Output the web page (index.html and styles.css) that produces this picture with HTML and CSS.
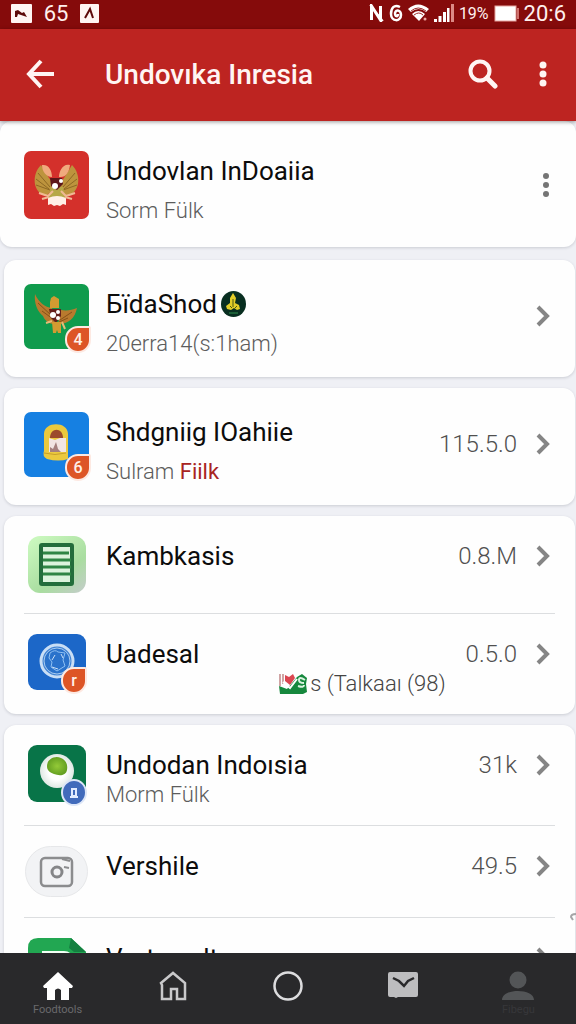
FILE: index.html
```html
<!DOCTYPE html>
<html lang="id">
<head>
    <meta charset="UTF-8">
    <meta name="viewport" content="width=device-width, initial-scale=1.0">
    <title>Undovıka Inresia</title>
    <link rel="stylesheet" href="styles.css">
</head>
<body>
    <div class="status">
        <svg width="21" height="19" viewBox="0 0 21 19"><rect width="21" height="19" rx="1" fill="#fff5f3"/><path d="M4 13V7l3-1 4 3 2-1 3 5-6-2-3-1-1 3z" fill="#5d0909"/></svg>
        <span class="status-num">65</span>
        <svg width="19" height="19" viewBox="0 0 19 19"><rect width="19" height="19" rx="1" fill="#fff5f3"/><path d="M5 14l5-9 3 9" fill="none" stroke="#5d0909" stroke-width="2"/></svg>
        <div class="status-right">
            <svg width="15" height="18" viewBox="0 0 15 18" fill="none" stroke="#fff"><path d="M2.500 16V2l9 14V2" stroke-width="3"/><path d="M1 1l13 16" stroke-width="1.500"/></svg>
            <svg width="14" height="18" viewBox="0 0 14 18" fill="none" stroke="#fff" stroke-width="2.500"><path d="M11 3C5 0 2 4 2 10c0 8 10 8 10 1 0-5-5-6-6-2 0 4 3 4 3 1"/></svg>
            <svg width="21" height="18" viewBox="0 0 21 18" fill="#fff"><path d="M0 5q10-9 21 0l-3 3q-7-6-15 0z"/><path d="M4 10q6-6 13 0l-6 7z"/><path d="M3 7q7-6 15 0M6 11q5-4 9 0" fill="none" stroke="#9c2a2a"/><circle cx="17" cy="15" r="1.500" fill="#f0a8a4"/></svg>
            <svg width="20" height="18" viewBox="0 0 20 18" fill="#fff"><path d="M0 15h3v3H0zM4.500 12h3v6h-3zM9 8h3v10H9zM13 4h2.500v14H13z"/><path d="M17 0h3v18h-3z" fill="#dc8a86"/></svg>
            <span class="status-pct">19%</span>
            <svg width="25" height="17" viewBox="0 0 25 17"><rect x="1" y="1" width="21" height="15" fill="#fff" stroke="#e8a5a0"/><path d="M23 3h2v11h-2z" fill="#cf716d"/></svg>
            <span class="status-time">20:6</span>
        </div>
    </div>

    <header class="bar">
        <button class="icon-btn" aria-label="Back">
            <svg width="28" height="30" viewBox="0 0 28 30" fill="none" stroke="#fff5f3" stroke-width="4"><path d="M15 2L3 15l12 13M3 15h25"/></svg>
        </button>
        <h1>Undovıka Inresia</h1>
        <button class="icon-btn" aria-label="Search">
            <svg width="30" height="30" viewBox="0 0 30 30" fill="none" stroke="#fff5f3"><circle cx="12" cy="12" r="9.500" stroke-width="4"/><path d="M19 19l8 8" stroke-width="5" stroke-linecap="round"/></svg>
        </button>
        <button class="icon-btn" aria-label="More">
            <svg width="8" height="26" viewBox="0 0 8 26" fill="#fff5f3"><circle cx="4" cy="4" r="3.500"/><circle cx="4" cy="13" r="3.500"/><circle cx="4" cy="22" r="3.500"/></svg>
        </button>
    </header>

    <main class="feed">
        <section class="card card-top">
            <div class="row row-large">
                <div class="app">
                    <svg width="65" height="68" viewBox="0 0 65 68">
                        <rect width="65" height="68" rx="7" fill="#d4302b"/>
                        <path d="M17 14C7 24 9 42 22 45l10-9-7-9zM48 14c10 10 8 28-5 31l-10-9 7-9z" fill="#bd943d"/>
                        <path d="M14 22l12 14M12 28l13 10M12 34l14 5M51 22L39 36M53 28L40 38M53 34l-14 5" stroke="#8d6824" stroke-width="1"/>
                        <path d="M18 14c7-1 10 6 10 12-6 0-10-6-10-12zM46 14c-7-2-11 6-11 12 7 1 10-5 11-12z" fill="#f0aa7d"/>
                        <path d="M27 36h12l3 12H24z" fill="#b6a847"/>
                        <path d="M24 47q9-4 18 0v7l-3-1-3 2-3-1-3 1-3-2-3 1z" fill="#fff0e6"/>
                        <path d="M26 27h12l1 6-6 6-6-4z" fill="#5c1719"/>
                        <circle cx="31" cy="35" r="3" fill="#fff"/><circle cx="37" cy="30" r="2" fill="#fff"/>
                        <path d="M15 42l9 3 5-5M51 42l-9 3-5-5M18 48l7-2M48 48l-7-2" stroke="#f0b994" stroke-width="2" fill="none"/>
                    </svg>
                </div>
                <div class="text">
                    <h2>Undovlan InDoaiia</h2>
                    <p>Sorm Fülk</p>
                </div>
                <button class="more-btn" aria-label="Options">
                    <svg width="24" height="24" viewBox="0 0 24 24" fill="#757575"><circle cx="12" cy="3" r="3"/><circle cx="12" cy="12" r="3"/><circle cx="12" cy="21" r="3"/></svg>
                </button>
            </div>
        </section>

        <section class="card">
            <a class="row row-large" href="#">
                <div class="app">
                    <svg width="65" height="65" viewBox="0 0 65 65">
                        <rect width="65" height="65" rx="7" fill="#109b4d"/>
                        <path d="M11 10c4 9 10 13 17 14l5 16c-7 1-12-3-14-8C13 27 10 19 11 10z" fill="#b97a2e"/>
                        <path d="M53 24c-5 2-10 3-16 2l-3 14c11 0 17-6 19-16z" fill="#b97a2e"/>
                        <path d="M14 19l14 13M18 27l11 8M48 28L36 36M44 34l-9 4" stroke="#875018" stroke-width="1"/>
                        <path d="M27 14l3-2 5 3v9h-9v-6z" fill="#d39b31"/>
                        <path d="M25 25h12v7l-5 7-5-5z" fill="#641f1c"/>
                        <circle cx="29" cy="31" r="3" fill="#fff"/><circle cx="34" cy="28" r="2" fill="#fff"/><circle cx="34" cy="34" r="2" fill="#fff"/>
                        <path d="M28 38h9v11h-3l-1-3-1 3h-3z" fill="#d39b31"/>
                        <path d="M28 37l-6 2m16-1l3 7" stroke="#e6bb76" stroke-width="2"/>
                    </svg>
                    <span class="badge">4</span>
                </div>
                <div class="text">
                    <h2>БïdaShod<svg class="seal" width="25" height="26" viewBox="0 0 25 26"><ellipse cx="12.500" cy="13" rx="12.500" ry="13" fill="#082e20"/><path d="M12 2l3 5-1 5 4 2 1 4-3 1-3-2-3 2-4-1-1-3 4-3V7z" fill="#e2cd27"/><path d="M12 8v8M9 15l2 2m5-2l-2 2" stroke="#4c5a12"/><path d="M8 22h9" stroke="#2e8f4c"/></svg></h2>
                    <p>20erra14(s:1ham)</p>
                </div>
                <svg class="chevron" width="24" height="24" viewBox="0 0 24 24"><path d="M7 3l9 9-9 9"/></svg>
            </a>
        </section>

        <section class="card">
            <a class="row row-large" href="#">
                <div class="app">
                    <svg width="65" height="65" viewBox="0 0 65 65">
                        <rect width="65" height="65" rx="7" fill="#1680e2"/>
                        <path d="M20 22c0-13 24-13 24 0v25q-9 3-21 0-5-3-3-8z" fill="#ebc93e"/>
                        <path d="M20 41q11 3 22 0" stroke="#c79f2c" fill="none"/>
                        <path d="M26 26c0-11 13-11 13 0z" fill="#9c4b2c"/>
                        <path d="M25 26l6 2 5-2h6v14H25z" fill="#f2e5e4"/>
                        <path d="M26 40v-5l3 2 3-7 2 7 3 3z" fill="#a5807f"/>
                    </svg>
                    <span class="badge">6</span>
                </div>
                <div class="text">
                    <h2>Shdgniig IOahiie</h2>
                    <p>Sulram <em>Fiilk</em></p>
                </div>
                <span class="value">115.5.0</span>
                <svg class="chevron" width="24" height="24" viewBox="0 0 24 24"><path d="M7 3l9 9-9 9"/></svg>
            </a>
        </section>

        <section class="card">
            <a class="row" href="#">
                <div class="app">
                    <svg width="58" height="57" viewBox="0 0 58 57">
                        <defs><linearGradient id="mint" x1="0.200" y1="0" x2="1" y2="1"><stop offset="0" stop-color="#c9f7bd"/><stop offset="0.600" stop-color="#a9dda0"/><stop offset="1" stop-color="#c5cccb"/></linearGradient></defs>
                        <rect width="58" height="57" rx="12" fill="url(#mint)"/>
                        <rect x="13" y="9" width="31" height="39" rx="1" fill="#dcf3dc" stroke="#236d3b" stroke-width="4"/>
                        <path d="M15 17h26M15 24h28M15 31h28M15 38h28" stroke="#2f8544" stroke-width="3"/>
                    </svg>
                </div>
                <div class="text">
                    <h2>Kambkasis</h2>
                </div>
                <span class="value">0.8.M</span>
                <svg class="chevron" width="24" height="24" viewBox="0 0 24 24"><path d="M7 3l9 9-9 9"/></svg>
            </a>
            <a class="row" href="#">
                <div class="app">
                    <svg width="58" height="56" viewBox="0 0 58 56">
                        <rect width="58" height="56" rx="9" fill="#1c67c8"/>
                        <circle cx="29" cy="27" r="16" fill="#3f82d4" stroke="#c9def5" stroke-width="3"/>
                        <circle cx="29" cy="27" r="13" fill="#2a72cb" stroke="#a9cbef" stroke-width="1"/>
                        <path d="M22 19q5-4 8-1l7 1-2 7 2 6-8 5-6-4 1-5-3-4z" fill="none" stroke="#8ec0f3"/>
                        <path d="M24 26l3-5M33 20l2 4M24 33l6 2" stroke="#c9def5"/>
                    </svg>
                    <span class="badge">r</span>
                </div>
                <div class="text">
                    <h2>Uadesal</h2>
                    <p class="note"><svg width="28" height="22" viewBox="0 0 28 22"><path d="M0 13l8 3L18 4l5-3 5 4-1 6 1 8-4 2H1z" fill="#16883d"/><path d="M1 1v12M4 1v10" stroke="#a34a4a"/><path d="M6 2l4 2 4-3 2 4-5 7-5-4z" fill="#db4650"/><path d="M4 9l7 6 7-9" stroke="#fff" stroke-width="2" fill="none"/><path d="M26 7q-6-4-6 0 0 3 5 3M19 13q6 2 6-1" stroke="#d9f2df" stroke-width="2" fill="none"/></svg> s (Talkaaı (98)</p>
                </div>
                <span class="value">0.5.0</span>
                <svg class="chevron" width="24" height="24" viewBox="0 0 24 24"><path d="M7 3l9 9-9 9"/></svg>
            </a>
        </section>

        <section class="card card-last">
            <a class="row" href="#">
                <div class="app">
                    <svg width="58" height="57" viewBox="0 0 58 57">
                        <defs>
                            <radialGradient id="egg"><stop offset="0.500" stop-color="#fff"/><stop offset="1" stop-color="#dfe8e3"/></radialGradient>
                            <radialGradient id="yolk"><stop offset="0" stop-color="#94ca38"/><stop offset="1" stop-color="#65a022"/></radialGradient>
                        </defs>
                        <rect width="58" height="57" rx="9" fill="#087448"/>
                        <ellipse cx="29" cy="26" rx="17" ry="17" fill="url(#egg)"/>
                        <path d="M19 21c0-7 8-11 14-8 5 2 7 7 6 12-1 6-8 6-13 4s-7-4-7-8z" fill="url(#yolk)"/>
                    </svg>
                    <span class="badge badge-blue"><svg width="8" height="10" viewBox="0 0 8 10" fill="none" stroke="#e3ecff" stroke-width="2"><path d="M2 1h4v7H2zM0 9h8"/></svg></span>
                </div>
                <div class="text">
                    <h2>Undodan Indoısia</h2>
                    <p>Morm Fülk</p>
                </div>
                <span class="value">31k</span>
                <svg class="chevron" width="24" height="24" viewBox="0 0 24 24"><path d="M7 3l9 9-9 9"/></svg>
            </a>
            <a class="row" href="#">
                <div class="app">
                    <svg width="63" height="51" viewBox="0 0 63 51">
                        <rect x="0.500" y="0.500" width="62" height="50" rx="25" fill="#f2f3f5" stroke="#e6e7e9"/>
                        <rect x="16" y="12" width="31" height="28" rx="4" fill="none" stroke="#8b8c8e" stroke-width="2.500"/>
                        <circle cx="32" cy="26" r="5" fill="none" stroke="#858688" stroke-width="3"/>
                        <path d="M37 13l8 2M39 21l5 1" stroke="#8b8c8e" stroke-width="2"/>
                    </svg>
                </div>
                <div class="text">
                    <h2>Vershile</h2>
                </div>
                <span class="value">49.5</span>
                <svg class="chevron" width="24" height="24" viewBox="0 0 24 24"><path d="M7 3l9 9-9 9"/></svg>
            </a>
            <a class="row" href="#">
                <div class="app">
                    <svg width="58" height="57" viewBox="0 0 58 57">
                        <path d="M10 0h33l15 14v33q0 10-10 10H10Q0 57 0 47V10Q0 0 10 0z" fill="#22a752"/>
                        <path d="M43 0l15 14H46l-5-4z" fill="#148040"/>
                        <path d="M14 13h22q8 0 8 8v23H14z" fill="#f3fff5"/>
                        <path d="M19 18h17v20H19z" fill="#22a752"/>
                    </svg>
                </div>
                <div class="text">
                    <h2>Vortowult</h2>
                </div>
                <svg class="chevron" width="24" height="24" viewBox="0 0 24 24"><path d="M7 3l9 9-9 9"/></svg>
            </a>
            <svg class="curl" width="6" height="8" viewBox="0 0 6 8"><path d="M6 1Q1 1 1 4l2 3" fill="none" stroke="#a5a5a7" stroke-width="2"/></svg>
        </section>
    </main>

    <nav class="tabs">
        <a href="#" class="tab active">
            <svg width="32" height="30" viewBox="0 0 32 30" fill="#fff"><path d="M16 1l15 14-1 2h-3v12h-8V19q-3-3-6 0v10H5V17H2l-1-2z"/></svg>
            <span>Foodtools</span>
        </a>
        <a href="#" class="tab" aria-label="Home">
            <svg width="28" height="30" viewBox="0 0 28 30" fill="none" stroke="#c9c9cb" stroke-width="2.500"><path d="M2 12L14 2l12 10v16h-8V18h-6v10H3V14z"/></svg>
        </a>
        <a href="#" class="tab" aria-label="Circle">
            <svg width="30" height="30" viewBox="0 0 30 30" fill="none" stroke="#dcdcde" stroke-width="2.500"><circle cx="15" cy="15" r="13.500"/></svg>
        </a>
        <a href="#" class="tab" aria-label="Mail">
            <svg width="32" height="28" viewBox="0 0 32 28"><path d="M3 1h26q2 0 2 2v21q0 2-2 2H11l-2 1-2-1H3q-2 0-2-2V3q0-2 2-2z" fill="#bdbdbf"/><path d="M6 7l6 3 5 5 4-5 6-3" fill="none" stroke="#29292b" stroke-width="2.500"/></svg>
        </a>
        <a href="#" class="tab dim">
            <svg width="34" height="30" viewBox="0 0 34 30" fill="#535557"><circle cx="17" cy="9" r="8.500"/><path d="M1 29c0-12 32-12 32 0z"/></svg>
            <span>Fibegu</span>
        </a>
    </nav>
</body>
</html>
```
FILE: styles.css
```css
* {
    box-sizing: border-box;
}
body {
    display: flex;
    flex-direction: column;
    height: 100vh;
    margin: 0;
    overflow: hidden;
    font-family: Roboto, "Liberation Sans", sans-serif;
    background: #eff0f5;
}
h1, h2, p {
    margin: 0;
}
a {
    color: inherit;
    text-decoration: none;
}
button {
    padding: 0;
    border: 0;
    background: none;
    cursor: pointer;
}
svg {
    display: block;
}

/* status bar */
.status {
    display: flex;
    flex: none;
    align-items: center;
    gap: 10px;
    height: 29px;
    padding: 0 10px 3px 11px;
    background: #850b0b;
    color: #fff0ee;
    font-size: 22px;
}
.status-num {
    width: 28px;
    text-align: center;
}
.status-right {
    display: flex;
    align-items: center;
    gap: 5px;
    margin-left: auto;
}
.status-pct {
    font-size: 16px;
}

/* app bar */
.bar {
    display: flex;
    flex: none;
    align-items: center;
    height: 92px;
    padding: 0 29px 2px 26px;
    background: #bd2421;
    box-shadow: 0 1px 4px rgba(0, 0, 0, 0.4);
    z-index: 1;
}
.bar h1 {
    flex: 1;
    margin-left: 51px;
    color: #fff5f3;
    font-size: 28px;
    font-weight: 500;
}
.bar .icon-btn:last-child {
    margin-left: 41px;
}

/* cards */
.feed {
    flex: 1;
    min-height: 0;
    overflow: hidden;
}
.card {
    margin: 0 1px 11px 4px;
    border-radius: 12px;
    background: #fefefe;
    box-shadow: 0 1px 3px rgba(60, 64, 80, 0.2);
}
.card-top {
    margin: 0 0 13px;
    padding: 4px 0 0 4px;
}
.row {
    display: flex;
    align-items: flex-start;
    margin: 0 20px;
    padding: 20px 0;
}
.row + .row {
    border-top: 1px solid #dcdee0;
}
.row-large {
    padding: 24px 0 13px;
}
.card-top .row {
    margin-right: 18px;
    padding: 26px 0 16px;
}
.app {
    position: relative;
    display: flex;
    flex: none;
    justify-content: center;
    width: 65px;
}
.text {
    flex: 1;
    margin-left: 17px;
    white-space: nowrap;
}
.text h2 {
    display: flex;
    align-items: center;
    color: #0c0c0c;
    font-size: 26px;
    font-weight: 400;
    line-height: 40px;
}
.text p {
    color: #5c5c5c;
    font-size: 22px;
    font-weight: 300;
    line-height: 20px;
}
.row-large .text p {
    line-height: 40px;
}
.text em {
    color: #a82422;
    font-style: normal;
    font-weight: 400;
}
.seal {
    margin-left: 4px;
}
.text .note {
    display: flex;
    align-items: center;
    justify-content: flex-end;
    gap: 3px;
    height: 20px;
    padding-right: 20px;
    color: #444;
}
.value {
    color: #505050;
    font-size: 24px;
    font-weight: 300;
    line-height: 40px;
}
.chevron {
    flex: none;
    margin: 8px 0 8px 14px;
    fill: none;
    stroke: #858585;
    stroke-width: 4;
}
.row-large .value {
    line-height: 64px;
}
.row-large .chevron {
    margin-top: 20px;
}
.more-btn {
    height: 68px;
}
.badge {
    position: absolute;
    right: -2px;
    bottom: -4px;
    width: 26px;
    height: 27px;
    border: 2px solid #fde9e2;
    border-radius: 13px 2px 13px 13px;
    background: #dd5526;
    color: #fff0e8;
    font-size: 16px;
    font-weight: 500;
    line-height: 23px;
    text-align: center;
}
.row-large .app {
    align-self: flex-start;
}
.row:not(.row-large) .app {
    align-self: flex-start;
}
.row:not(.row-large) .badge {
    right: 2px;
}
.badge-blue {
    display: flex;
    align-items: center;
    justify-content: center;
    border-color: #dde6f7;
    border-radius: 50%;
    background: #426bbb;
}
.card-last {
    position: relative;
    margin-bottom: 0;
}
.curl {
    position: absolute;
    top: 188px;
    right: -1px;
}

/* bottom navigation */
.tabs {
    display: flex;
    flex: none;
    height: 71px;
    background: #29292b;
    z-index: 1;
}
.tab {
    display: flex;
    flex: 1;
    flex-direction: column;
    align-items: center;
    gap: 2px;
    padding-top: 18px;
    color: #69696b;
    font-size: 11px;
}
.dim {
    color: #37373a;
}
```
